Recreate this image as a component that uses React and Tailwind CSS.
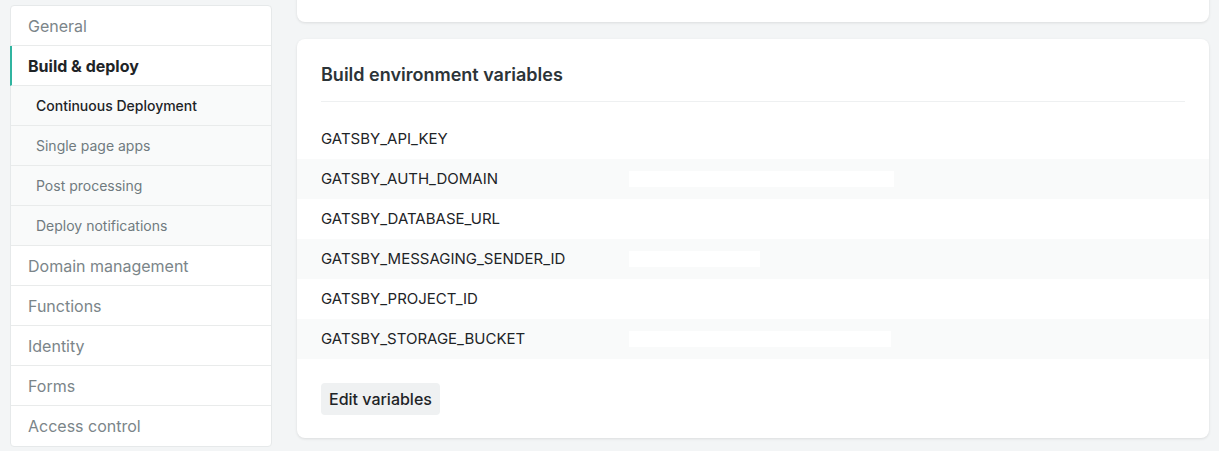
import React from 'react';

const NAV = [
  { label: 'General', level: 0 },
  { label: 'Build & deploy', level: 0, active: true },
  { label: 'Continuous Deployment', level: 1, current: true },
  { label: 'Single page apps', level: 1 },
  { label: 'Post processing', level: 1 },
  { label: 'Deploy notifications', level: 1 },
  { label: 'Domain management', level: 0 },
  { label: 'Functions', level: 0 },
  { label: 'Identity', level: 0 },
  { label: 'Forms', level: 0 },
  { label: 'Access control', level: 0 },
];

// values are redacted in the screenshot, so only the blank boxes are kept
const VARS = [
  { key: 'GATSBY_API_KEY', mask: null },
  { key: 'GATSBY_AUTH_DOMAIN', mask: 'w-[265px]' },
  { key: 'GATSBY_DATABASE_URL', mask: null },
  { key: 'GATSBY_MESSAGING_SENDER_ID', mask: 'w-[131px]' },
  { key: 'GATSBY_PROJECT_ID', mask: null },
  { key: 'GATSBY_STORAGE_BUCKET', mask: 'w-[262px]' },
];

const NavItem = ({ item }) => {
  if (item.level === 1) {
    return (
      <div className={
        "h-10 flex items-center pl-[25px] bg-[#f9fafa] border-b border-[#e9ebeb] text-[14px] " +
        (item.current ? "text-[#1e2427] font-medium" : "text-[#707a7f]")
      }>
        {item.label}
      </div>
    );
  }
  if (item.active) {
    return (
      <div className="h-10 flex items-center -ml-px pl-4 border-b border-[#e9ebeb] border-l-2 border-l-[#30b4a0] text-[16px] font-bold text-[#1e2427]">
        {item.label}
      </div>
    );
  }
  return (
    <div className="h-10 flex items-center pl-[17px] border-b border-[#e9ebeb] text-[16px] text-[#7b8589] last:border-b-0">
      {item.label}
    </div>
  );
};

export default function App() {
  return (
    <div className="h-[451px] bg-[#f3f5f6] flex gap-[25px] px-[10px] font-['Inter',sans-serif] overflow-hidden">
      {/* Sidebar */}
      <aside className="w-[262px] shrink-0 mt-[5px] self-start bg-white border border-[#e6e9ea] rounded-[4px]">
        {NAV.map((item) => (
          <NavItem key={item.label} item={item} />
        ))}
      </aside>

      {/* Main */}
      <main className="flex-1 flex flex-col gap-[17px] -mt-[20px]">
        <div className="h-[42px] bg-white rounded-[8px] shadow-[0_1px_3px_rgba(0,0,0,0.1)]" />

        <section className="bg-white rounded-[8px] shadow-[0_1px_3px_rgba(0,0,0,0.1)] pt-[24px] pb-[23px]">
          <div className="px-6">
            <h2 className="text-[18px] font-semibold text-[#2c3438] leading-[24px] pb-[14px] border-b border-[#eef0f1]">
              Build environment variables
            </h2>
          </div>

          <div className="mt-[17px]">
            {VARS.map((v, i) => (
              <div
                key={v.key}
                className={"h-10 flex items-center px-6 " + (i % 2 === 1 ? "bg-[#f9fafa]" : "bg-white")}
              >
                <span className="w-[308px] shrink-0 text-[15px] text-[#1e2427]">{v.key}</span>
                {v.mask && <span className={"h-[16px] bg-white " + v.mask} />}
              </div>
            ))}
          </div>

          <div className="px-6 mt-[24px]">
            <button className="h-8 px-2 rounded-[4px] bg-[#eff1f2] text-[16px] font-medium text-[#1e2427]">
              Edit variables
            </button>
          </div>
        </section>
      </main>
    </div>
  );
}
